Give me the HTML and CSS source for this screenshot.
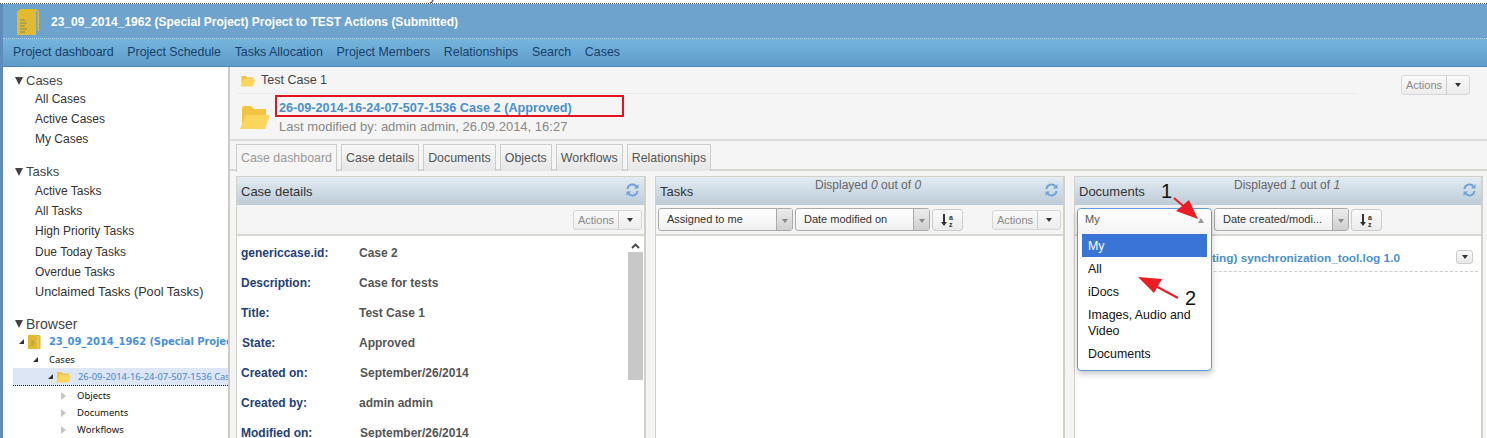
FILE: index.html
```html
<!DOCTYPE html>
<html lang="en">
<head>
<meta charset="utf-8">
<title>Case dashboard</title>
<link rel="stylesheet" href="styles.css">
</head>
<body>
<div class="page">
  <div class="cutoff"><div class="cutoff-inner"><span class="c1">Allocation</span><span class="c2">library</span><span class="c3">tools</span></div></div>
  <div class="shell">
    <header class="head">
      <svg class="book" width="23" height="26" viewBox="0 0 23 26"><path d="M3 0h15a4 4 0 0 1 4 4v18h-1.500V4A2.500 2.500 0 0 0 18 1.500H3z" fill="#e3b92f"/><path d="M0 4a3 3 0 0 1 3-3h14a2 2 0 0 1 2 2v23H0z" fill="#e3b92f"/><path d="M3 11h5M3 14h7M3 17h5M3 20h7M3 23h5" stroke="#9c9a5c" stroke-width="1.300"/></svg>
      <h1 class="head-title">23_09_2014_1962 (Special Project) Project to TEST Actions (Submitted)</h1>
    </header>
    <nav class="nav"><a>Project dashboard</a><a>Project Schedule</a><a>Tasks Allocation</a><a>Project Members</a><a>Relationships</a><a>Search</a><a>Cases</a></nav>
    <div class="main">
      <aside class="side">
        <section class="group">
          <h2 class="group-h"><span class="tri"></span>Cases</h2>
          <a class="item">All Cases</a><a class="item">Active Cases</a><a class="item">My Cases</a>
        </section>
        <section class="group">
          <h2 class="group-h"><span class="tri"></span>Tasks</h2>
          <a class="item item-gap">Active Tasks</a><a class="item">All Tasks</a><a class="item">High Priority Tasks</a><a class="item item-gap">Due Today Tasks</a><a class="item">Overdue Tasks</a><a class="item item-wide">Unclaimed Tasks (Pool Tasks)</a>
        </section>
        <section class="group group-tree">
          <h2 class="group-h group-h-lg"><span class="tri"></span>Browser</h2>
          <div class="tree-row tree-top"><span class="exp"></span><svg class="tree-book" width="14" height="15" viewBox="0 0 14 15"><path d="M1 1h11a1.500 1.500 0 0 1 1.500 1.500V15H1z" fill="#e3b92f"/><path d="M11 2v13" stroke="#f3d872"/><path d="M4 7h3M4 9h4M4 11h3" stroke="#a89a4e"/></svg><a class="tree-link">23_09_2014_1962 (Special Project) Project to TEST Actions</a></div>
          <div class="tree-row tree-cases"><span class="exp"></span><span class="tree-text">Cases</span></div>
          <div class="tree-row tree-sel"><span class="exp"></span><svg class="tree-folder" width="15" height="13" viewBox="0 0 30 26"><path d="M2 24V4h9l3 3h12v4H8z" fill="#f2c443"/><path d="M0 25l6-14h24l-5 14z" fill="#fad75c"/></svg><a class="tree-case">26-09-2014-16-24-07-507-1536 Case 2 (Approved)</a></div>
          <div class="tree-row tree-leaf leaf-a"><span class="leaf-arrow"></span><span class="tree-text">Objects</span></div>
          <div class="tree-row tree-leaf leaf-b"><span class="leaf-arrow"></span><span class="tree-text">Documents</span></div>
          <div class="tree-row tree-leaf leaf-b"><span class="leaf-arrow"></span><span class="tree-text">Workflows</span></div>
        </section>
      </aside>
      <main class="content">
        <div class="crumb">
          <svg class="crumb-folder" width="16" height="13" viewBox="0 0 30 26"><path d="M2 24V4h9l3 3h12v4H8z" fill="#f2c443"/><path d="M0 25l6-14h24l-5 14z" fill="#fad75c"/></svg>
          <span>Test Case 1</span>
          <div class="actions actions-main"><span class="actions-l">Actions</span><span class="actions-r"><i class="caret"></i></span></div>
        </div>
        <div class="case-head">
          <svg class="case-folder" width="30" height="26" viewBox="0 0 30 26"><path d="M2 24V4a2 2 0 0 1 2-2h7l3 3h12v6H8z" fill="#f2c443"/><path d="M0 25l6-14h24l-5 14z" fill="#fad75c"/></svg>
          <div class="case-text">
            <a class="case-link">26-09-2014-16-24-07-507-1536 Case 2 (Approved)</a>
            <div class="case-sub">Last modified by: admin admin, 26.09.2014, 16:27</div>
          </div>
        </div>
        <div class="tabs"><a class="tab tab-on">Case dashboard</a><a class="tab">Case details</a><a class="tab">Documents</a><a class="tab">Objects</a><a class="tab">Workflows</a><a class="tab">Relationships</a></div>
        <div class="panels">
          <section class="panel">
            <div class="panel-h"><span class="panel-title">Case details</span><svg class="refresh" width="13" height="14" viewBox="0 0 13 14"><path d="M1.500 6A5 5 0 0 1 10.500 3.500M11.500 8A5 5 0 0 1 2.500 10.500" fill="none" stroke="#6fa3d8" stroke-width="2"/><path d="M12.500 1v4.500H8zM.5 13V8.500H5z" fill="#6fa3d8"/></svg></div>
            <div class="panel-t panel-t-end"><div class="actions"><span class="actions-l">Actions</span><span class="actions-r"><i class="caret"></i></span></div></div>
            <div class="panel-b panel-b-details">
              <dl class="details">
                <div class="drow"><dt>genericcase.id:</dt><dd>Case 2</dd></div>
                <div class="drow"><dt>Description:</dt><dd>Case for tests</dd></div>
                <div class="drow"><dt>Title:</dt><dd>Test Case 1</dd></div>
                <div class="drow"><dt class="nudge">State:</dt><dd>Approved</dd></div>
                <div class="drow"><dt>Created on:</dt><dd class="nudge">September/26/2014</dd></div>
                <div class="drow"><dt>Created by:</dt><dd>admin admin</dd></div>
                <div class="drow"><dt>Modified on:</dt><dd class="nudge">September/26/2014</dd></div>
              </dl>
              <div class="scroll"><svg class="scroll-up" width="9" height="6" viewBox="0 0 9 6"><path d="M1 5l3.500-3.500L8 5" fill="none" stroke="#444" stroke-width="1.800"/></svg><div class="thumb"></div></div>
            </div>
          </section>
          <section class="panel">
            <div class="panel-h"><span class="panel-title panel-title-w">Tasks</span><span class="count">Displayed <i>0</i> out of <i>0</i></span><svg class="refresh" width="13" height="14" viewBox="0 0 13 14"><path d="M1.500 6A5 5 0 0 1 10.500 3.500M11.500 8A5 5 0 0 1 2.500 10.500" fill="none" stroke="#6fa3d8" stroke-width="2"/><path d="M12.500 1v4.500H8zM.5 13V8.500H5z" fill="#6fa3d8"/></svg></div>
            <div class="panel-t">
              <div class="combo"><span class="combo-v">Assigned to me</span><span class="combo-a"><i class="down"></i></span></div>
              <div class="combo"><span class="combo-v">Date modified on</span><span class="combo-a"><i class="down"></i></span></div>
              <div class="sort"><svg width="16" height="13" viewBox="0 0 16 13"><path d="M4 0v9" stroke="#333" stroke-width="2"/><path d="M1 8h6l-3 4z" fill="#333"/><text x="9" y="6" class="sort-t">a</text><text x="9" y="12.500" class="sort-t">z</text></svg></div>
              <div class="actions actions-push"><span class="actions-l">Actions</span><span class="actions-r"><i class="caret"></i></span></div>
            </div>
            <div class="panel-b"></div>
          </section>
          <section class="panel">
            <div class="panel-h"><span class="panel-title panel-title-w">Documents</span><span class="count">Displayed <i>1</i> out of <i>1</i></span><svg class="refresh" width="13" height="14" viewBox="0 0 13 14"><path d="M1.500 6A5 5 0 0 1 10.500 3.500M11.500 8A5 5 0 0 1 2.500 10.500" fill="none" stroke="#6fa3d8" stroke-width="2"/><path d="M12.500 1v4.500H8zM.5 13V8.500H5z" fill="#6fa3d8"/></svg></div>
            <div class="panel-t">
              <div class="open-slot">
                <div class="drop">
                  <div class="drop-v"><span>My</span><i class="up"></i></div>
                  <ul class="drop-list">
                    <li class="drop-on">My</li><li>All</li><li>iDocs</li><li>Images, Audio and Video</li><li>Documents</li>
                  </ul>
                </div>
              </div>
              <div class="combo"><span class="combo-v">Date created/modi...</span><span class="combo-a"><i class="down"></i></span></div>
              <div class="sort"><svg width="16" height="13" viewBox="0 0 16 13"><path d="M4 0v9" stroke="#333" stroke-width="2"/><path d="M1 8h6l-3 4z" fill="#333"/><text x="9" y="6" class="sort-t">a</text><text x="9" y="12.500" class="sort-t">z</text></svg></div>
            </div>
            <div class="panel-b">
              <div class="doc-row"><a class="doc-link">Doc 1 (Testing) synchronization_tool.log 1.0</a><span class="doc-menu"><i class="caret"></i></span></div>
            </div>
          </section>
        </div>
      </main>
    </div>
  </div>
  <div class="redbox"></div>
  <span class="mark mark-1">1</span>
  <span class="mark mark-2">2</span>
  <svg class="arrows" width="1487" height="438" viewBox="0 0 1487 438">
    <path d="M1174 198L1189 211" stroke="#ea1c24" stroke-width="2"/><path d="M1198 219L1176 211L1189 200z" fill="#ea1c24"/>
    <path d="M1178 298L1150 283" stroke="#ea1c24" stroke-width="2"/><path d="M1138 277L1162 279L1154 293z" fill="#ea1c24"/>
  </svg>
</div>
</body>
</html>
```
FILE: styles.css
```css
* { box-sizing: border-box; }
html, body { margin: 0; padding: 0; }
body { font-family: "Liberation Sans", Arial, sans-serif; font-size: 12px; color: #444; background: #fff; overflow: hidden; }
.page { position: relative; width: 1487px; height: 438px; overflow: hidden; display: flex; flex-direction: column; }
.cutoff { height: 4px; overflow: hidden; border-bottom: 1px dotted #555; flex: none; }
.cutoff-inner { display: flex; margin-top: -11px; line-height: 14px; color: #333; }
.c1 { margin-left: 295px; width: 108px; font-size: 12px; }
.c2 { width: 93px; }
.shell { flex: 1; min-height: 0; display: flex; flex-direction: column; border-left: 3px solid #5f8cbb; }
.head { height: 35px; flex: none; background: #6ea3cd; display: flex; align-items: center; border-bottom: 1px dotted #b9d6ea; }
.book { margin-left: 14px; margin-top: 1px; flex: none; }
.head-title { margin: 1px 0 0 11px; font-size: 12px; font-weight: bold; color: #fff; white-space: nowrap; }
.nav { height: 28px; flex: none; background: linear-gradient(#74b5dc, #5f9cc9); border-bottom: 1px solid #4f86b4; display: flex; align-items: center; padding: 0 0 2px 10px; gap: 13.7px; font-size: 12.4px; color: #17406b; }
.main { flex: 1; min-height: 0; display: flex; }
.side { width: 225px; flex: none; overflow: hidden; background: #fff; padding-top: 6px; }
.group { margin-bottom: 15px; }
.group-tree { margin-top: -1px; }
.group-h { margin: 0; height: 16px; line-height: 16px; font-size: 13px; font-weight: normal; color: #444; display: flex; align-items: center; padding-left: 12px; }
.group-h-lg { font-size: 14px; }
.tri { width: 0; height: 0; border-left: 4px solid transparent; border-right: 4px solid transparent; border-top: 8px solid #444; margin-right: 3px; }
.item { display: block; height: 20px; line-height: 20px; padding-left: 32px; font-size: 12px; color: #333; white-space: nowrap; }
.item-gap { margin-top: 1px; }
.item-wide { font-size: 12.67px; }
.tree-row { display: flex; align-items: center; white-space: nowrap; overflow: hidden; font-family: "Noto Sans", sans-serif; font-size: 9.5px; color: #111; }
.exp { width: 0; height: 0; border-bottom: 5px solid #333; border-left: 5px solid transparent; flex: none; }
.tree-top { height: 18px; padding-left: 16px; }
.tree-book { margin-left: 3px; flex: none; }
.tree-link { margin-left: 8px; font-family: "DejaVu Sans", sans-serif; font-size: 10px; font-weight: bold; color: #4a90d6; letter-spacing: -.1px; }
.tree-cases { height: 18px; padding-left: 30px; }
.tree-cases .tree-text { margin-left: 11px; }
.tree-sel { height: 18px; margin-left: 10px; padding-left: 35px; background: #dce6f5; border-bottom: 1px dotted #222; }
.tree-folder { margin-left: 3px; flex: none; }
.tree-case { margin-left: 7px; color: #4a85c5; font-size: 9.4px; }
.tree-leaf { height: 17px; padding-left: 58px; }
.leaf-a { margin-top: 1px; }
.leaf-arrow { width: 0; height: 0; border-left: 5px solid #c4c4c4; border-top: 4px solid transparent; border-bottom: 4px solid transparent; flex: none; }
.tree-leaf .tree-text { margin-left: 11px; }
.content { flex: 1; min-width: 0; border-left: 2px solid #ccc; background: #f5f5f5; display: flex; flex-direction: column; overflow: hidden; }
.crumb { height: 27px; margin-left: 8px; margin-right: 129px; flex: none; display: flex; align-items: center; border-bottom: 1px solid #ebebeb; color: #444; position: relative; font-size: 12.5px; }
.crumb-folder { margin-left: 2px; margin-right: 5px; }
.actions { width: 69px; height: 20px; display: flex; border: 1px solid #d6d6d6; border-radius: 3px; background: linear-gradient(#fafafa, #ececec); font-size: 11px; color: #8a8a8a; }
.actions-main { position: absolute; right: -112px; top: 8px; }
.actions-l { flex: 1; text-align: center; line-height: 18px; }
.actions-r { width: 23px; border-left: 1px solid #ccc; display: flex; align-items: center; justify-content: center; }
.caret { width: 0; height: 0; border-left: 3.5px solid transparent; border-right: 3.5px solid transparent; border-top: 4px solid #333; }
.case-head { height: 47px; flex: none; display: flex; border-bottom: 2px solid #dedede; padding-left: 10px; }
.case-folder { margin-top: 10px; flex: none; }
.case-text { margin-left: 9px; padding-top: 6px; }
.case-link { display: block; font-size: 12.67px; font-weight: bold; color: #4a90cc; line-height: 16px; }
.case-sub { font-size: 13px; color: #888; line-height: 16px; margin-top: 3px; }
.tabs { height: 30px; flex: none; display: flex; gap: 4px; padding: 3px 0 0 6px; border-bottom: 2px solid #d8d6d0; }
.tab { height: 27px; padding: 0 4px; line-height: 26px; font-size: 12.4px; color: #555; border: 1px solid #ccc; border-bottom: 0; background: linear-gradient(#f8f8f8, #e6e6e6); white-space: nowrap; }
.tab-on { background: #f5f5f5; color: #999; height: 28px; }
.panels { flex: 1; min-height: 0; display: grid; grid-template-columns: 410px 410px 409px; gap: 9px; padding: 5px 0 0 6px; }
.panel { border: 2px solid #d3d0c8; display: flex; flex-direction: column; min-height: 0; background: #fff; border-width: 1px 2px 0 1px; }
.panel-h { height: 28px; flex: none; background: linear-gradient(#e2ecf2, #bccbd8); display: flex; padding: 0 5px 0 4px; font-size: 13px; color: #333; position: relative; }
.panel-title { line-height: 30px; }
.panel-title-w { width: 155px; flex: none; }
.count { font-size: 12px; color: #666; line-height: 16px; }
.refresh { margin: 6px 0 0 auto; flex: none; }
.panel-t { height: 31px; flex: none; background: #f5f5f5; border-bottom: 2px solid #d8d6d0; display: flex; gap: 2px; padding: 3px 2px 0; align-items: flex-start; }
.panel-t-end { justify-content: flex-end; padding-top: 5px; }
.combo { width: 135px; height: 23px; flex: none; display: flex; border: 1px solid #aaa; border-radius: 3px; background: linear-gradient(#fff, #f0f0f0); font-size: 11px; color: #333; }
.combo-v { flex: 1; line-height: 20px; padding-left: 8px; white-space: nowrap; overflow: hidden; }
.combo-a { width: 16px; border-left: 1px solid #aaa; background: linear-gradient(#ececec, #cfcfcf); display: flex; align-items: center; justify-content: center; }
.down { width: 0; height: 0; border-left: 3px solid transparent; border-right: 3px solid transparent; border-top: 4px solid #888; margin-top: 3px; }
.sort { width: 31px; height: 22px; flex: none; margin-top: 1px; border: 1px solid #ccc; border-radius: 3px; background: linear-gradient(#fbfbfb, #ebebeb); display: flex; align-items: center; justify-content: center; }
.sort-t { font-size: 7px; font-weight: bold; font-family: "Liberation Sans", sans-serif; fill: #333; }
.actions-push { margin-left: auto; margin-top: 2px; }
.panel-b { flex: 1; min-height: 0; background: #fff; }
.panel-b-details { display: flex; justify-content: space-between; overflow: hidden; }
.details { margin: 2px 0 0; padding: 0 0 0 4px; font-weight: bold; font-size: 12px; }
.drow { height: 30px; display: flex; align-items: center; }
.drow dt { width: 118px; color: #24407a; }
.drow dd { margin: 0; color: #555; }
.drow .nudge { padding-left: 1px; }
.scroll { width: 15px; margin-right: 1px; flex: none; display: flex; flex-direction: column; align-items: center; }
.scroll-up { margin-top: 7px; margin-bottom: 3px; }
.thumb { width: 15px; height: 128px; background: #c8c8c8; }
.open-slot { width: 135px; height: 23px; flex: none; position: relative; }
.drop { position: absolute; left: 0; top: 0; width: 135px; z-index: 3; background: #fff; border: 1px solid #5b9ae8; border-radius: 4px; box-shadow: 0 3px 6px rgba(0,0,0,.22); font-size: 11px; color: #555; }
.drop-v { height: 25px; padding: 0 7px; display: flex; align-items: flex-start; justify-content: space-between; line-height: 20px; background: linear-gradient(#fff, #f3f3f3); border-radius: 4px 4px 0 0; }
.up { width: 0; height: 0; border-left: 3px solid transparent; border-right: 3px solid transparent; border-bottom: 5px solid #999; margin-top: 9px; }
.drop-list { list-style: none; margin: 0; padding: 0 4px 5px; font-size: 12.4px; color: #111; }
.drop-list li { padding: 4px 6px 3px; line-height: 16px; }
.drop-list .drop-on { background: #3a75d6; color: #fff; }
.doc-row { display: flex; align-items: flex-start; justify-content: space-between; margin: 0 3px; height: 36px; border-bottom: 1px dashed #ccc; padding-top: 14px; }
.doc-link { font-size: 11.8px; font-weight: bold; color: #4a90cc; white-space: nowrap; width: 322px; text-align: right; line-height: 16px; }
.doc-menu { width: 17px; height: 14px; border: 1px solid #ccc; border-radius: 3px; background: linear-gradient(#fafafa, #e8e8e8); display: flex; align-items: center; justify-content: center; margin-right: 5px; }
.redbox { position: absolute; left: 275px; top: 95px; width: 349px; height: 22px; border: 2px solid #e3141c; z-index: 4; }
.mark { position: absolute; z-index: 5; font-size: 20px; color: #111; font-family: "Liberation Sans", sans-serif; line-height: 20px; }
.mark-1 { left: 1161px; top: 181px; }
.mark-2 { left: 1185px; top: 288px; }
.arrows { position: absolute; left: 0; top: 0; z-index: 4; pointer-events: none; }
```
